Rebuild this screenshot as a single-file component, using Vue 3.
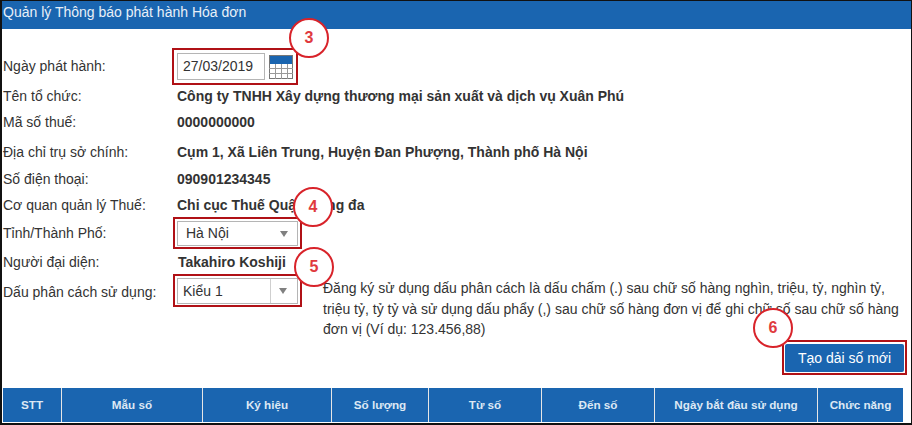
<template>
  <div class="page">
    <div class="title">Quản lý Thông báo phát hành Hóa đơn</div>
    <div class="form">
      <div class="row row-date">
        <label>Ngày phát hành:</label>
        <div class="mark mark-date">
          <div class="date-input">27/03/2019</div>
          <svg class="cal" width="24" height="24" viewBox="0 0 24 24">
            <rect x="0" y="0" width="24" height="9" fill="#1a65b0" />
            <rect x="0.5" y="0.5" width="23" height="23" fill="none" stroke="#777" />
            <path d="M0 13.5H24M0 18.5H24M6.5 9V24M12.5 9V24M18.5 9V24" stroke="#999" fill="none" />
          </svg>
          <span class="num num-3">3</span>
        </div>
      </div>
      <div class="row h22">
        <label>Tên tổ chức:</label><b>Công ty TNHH Xây dựng thương mại sản xuất và dịch vụ Xuân Phú</b>
      </div>
      <div class="row h30">
        <label>Mã số thuế:</label><b>0000000000</b>
      </div>
      <div class="row h30">
        <label>Địa chỉ trụ sở chính:</label><b>Cụm 1, Xã Liên Trung, Huyện Đan Phượng, Thành phố Hà Nội</b>
      </div>
      <div class="row h24">
        <label>Số điện thoại:</label><b>090901234345</b>
      </div>
      <div class="row h28">
        <label>Cơ quan quản lý Thuế:</label><b>Chi cục Thuế Quận Đống đa</b>
      </div>
      <div class="row h28">
        <label>Tỉnh/Thành Phố:</label>
        <div class="mark mark-select">
          <div class="select city">Hà Nội<i class="caret"></i></div>
          <span class="num num-4">4</span>
        </div>
      </div>
      <div class="row h30">
        <label>Người đại diện:</label><b class="person">Takahiro Koshiji</b>
      </div>
      <div class="row row-sep">
        <label>Dấu phân cách sử dụng:</label>
        <div class="mark mark-sep">
          <div class="select kind"><span>Kiểu 1</span><em><i class="caret"></i></em></div>
          <span class="num num-5">5</span>
        </div>
        <p class="note">Đăng ký sử dụng dấu phân cách là dấu chấm (.) sau chữ số hàng nghìn, triệu, tỷ, nghìn tỷ, triệu tỷ, tỷ tỷ và sử dụng dấu phẩy (,) sau chữ số hàng đơn vị để ghi chữ số sau chữ số hàng đơn vị (Ví dụ: 123.456,88)</p>
      </div>
    </div>
    <div class="actions">
      <div class="mark mark-btn">
        <button>Tạo dải số mới</button>
        <span class="num num-6">6</span>
      </div>
    </div>
    <div class="thead">
      <div v-for="col in columns" :key="col.name" class="th" :style="{ width: col.width + 'px' }">{{ col.name }}</div>
    </div>
  </div>
</template>

<script setup>
const columns = [
  { name: 'STT', width: 58 },
  { name: 'Mẫu số', width: 141 },
  { name: 'Ký hiệu', width: 129 },
  { name: 'Số lượng', width: 97 },
  { name: 'Từ số', width: 113 },
  { name: 'Đến số', width: 113 },
  { name: 'Ngày bắt đầu sử dụng', width: 163 },
  { name: 'Chức năng', width: 86 },
]
</script>

<style>
html,
body {
  margin: 0;
  background: #fff;
}
</style>

<style scoped>
.page {
  width: 912px;
  height: 425px;
  box-sizing: border-box;
  border: 1px solid #111;
  border-width: 1px 1px 2px 2px;
  background: #fff;
  color: #333;
  font-family: "Liberation Sans", Arial, sans-serif;
  font-size: 14px;
  overflow: hidden;
}

.title {
  height: 28px;
  line-height: 23px;
  padding-left: 1px;
  background: #1a65b0;
  color: #e8f0f8;
  font-size: 14px;
}

.form {
  padding-top: 19px;
}

.row {
  display: flex;
  align-items: center;
  padding-left: 1px;
}

.row label {
  width: 174px;
  flex: none;
}

.row b {
  color: #333;
}

.row-date {
  height: 37px;
}

.row-date label {
  padding-bottom: 2px;
}

.h22 {
  height: 22px;
}

.h24 {
  height: 24px;
}

.h28 {
  height: 28px;
}

.h30 {
  height: 30px;
}

.person {
  margin-left: 1px;
}

.row-sep {
  align-items: flex-start;
  height: 63px;
}

.row-sep label {
  padding-top: 7px;
}

.mark {
  position: relative;
  display: flex;
  align-items: center;
  box-sizing: border-box;
  border: 2px solid #b01116;
}

.mark-date {
  width: 126px;
  height: 37px;
  margin-left: -5px;
  padding-left: 3px;
  gap: 4px;
}

.date-input {
  box-sizing: border-box;
  width: 88px;
  height: 27px;
  line-height: 25px;
  border: 1px solid #b5b5b5;
  padding-left: 5px;
  font-size: 14px;
}

.cal {
  flex: none;
}

.select {
  position: relative;
  box-sizing: border-box;
  height: 25px;
  line-height: 23px;
  border: 1px solid #b5b5b5;
  background: #fff;
}

.caret {
  position: absolute;
  top: 9px;
  width: 0;
  height: 0;
  border: 4.5px solid transparent;
  border-top: 6px solid #808080;
  border-bottom: 0;
}

.mark-select {
  flex: none;
  width: 129px;
  height: 32px;
  margin-left: -4px;
  padding-left: 2px;
}

.city {
  width: 121px;
  padding-left: 8px;
}

.city .caret {
  right: 9px;
}

.mark-sep {
  width: 129px;
  height: 33px;
  margin: -3px 0 0 -4px;
  padding-left: 2px;
  flex: none;
}

.kind {
  width: 121px;
  height: 26px;
  line-height: 24px;
  padding-left: 5px;
}

.kind em {
  position: absolute;
  top: 0;
  right: 0;
  width: 26px;
  height: 24px;
  border-left: 1px solid #cfcfcf;
}

.kind .caret {
  left: 8px;
}

.note {
  width: 580px;
  margin: 1px 0 0 21px;
  line-height: 20.5px;
  font-size: 14px;
}

.actions {
  display: flex;
  justify-content: flex-end;
  padding-right: 4px;
}

.mark-btn {
  width: 125px;
  height: 35px;
  padding: 2px 1px 1px;
}

.mark-btn button {
  width: 100%;
  height: 100%;
  border: 0;
  border-radius: 2px;
  background: #1a65b0;
  color: #fff;
  font: 14px "Liberation Sans", Arial, sans-serif;
}

.num {
  position: absolute;
  box-sizing: border-box;
  width: 40px;
  height: 40px;
  border: 2px solid #d8232a;
  border-radius: 50%;
  background: #fff;
  color: #e03a3e;
  font-size: 16px;
  font-weight: 700;
  line-height: 36px;
  text-align: center;
}

.num-3 {
  top: -32px;
  left: 115px;
}

.num-4 {
  top: -32px;
  left: 118px;
}

.num-5 {
  top: -29px;
  left: 119px;
}

.num-6 {
  top: -34px;
  left: -31px;
}

.thead {
  display: flex;
  height: 34px;
  margin-top: 13px;
  padding-left: 1px;
}

.th {
  box-sizing: border-box;
  border-left: 1px solid #e6e6e6;
  background: #1a65b0;
  color: #dde8f4;
  font-size: 11.7px;
  font-weight: 700;
  line-height: 34px;
  text-align: center;
}

.th:first-child {
  border-left: 0;
}
</style>
